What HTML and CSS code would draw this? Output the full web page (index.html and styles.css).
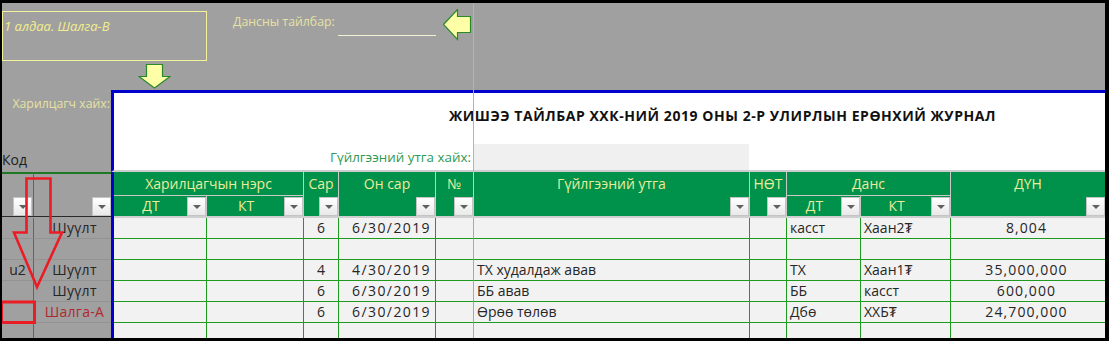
FILE: index.html
```html
<!DOCTYPE html>
<html lang="mn">
<head>
<meta charset="utf-8">
<title>Ерөнхий журнал</title>
<link rel="stylesheet" href="styles.css">
</head>
<body>
<div class="frame">
  <div class="top">
    <div class="top-row">
      <div class="note">1 алдаа. Шалга-В</div>
      <div class="acct-label">Дансны тайлбар:</div>
      <div class="acct-input"></div>
      <svg class="arrow-left" width="29" height="32" viewBox="0 0 29 32"><polygon points="0.5,15.5 14.5,0.5 14.5,7.5 27.5,7.5 27.5,23.5 14.5,23.5 14.5,30.5" fill="#ffffa8" stroke="#2a8a2a" stroke-width="1.2"/></svg>
    </div>
    <svg class="arrow-down" width="33" height="25" viewBox="0 0 33 25"><polygon points="8.5,0.5 24.5,0.5 24.5,12.5 32,12.5 16.5,24 1,12.5 8.5,12.5" fill="#ffffa8" stroke="#2a8a2a" stroke-width="1.2"/></svg>
  </div>

  <div class="mid">
    <div class="mid-left">
      <div class="cust-search">Харилцагч хайх:</div>
      <div class="code">Код</div>
    </div>
    <div class="mid-right">
      <div class="title">ЖИШЭЭ ТАЙЛБАР ХХК-НИЙ 2019 ОНЫ 2-Р УЛИРЛЫН ЕРӨНХИЙ ЖУРНАЛ</div>
      <div class="search-row">
        <div class="search-label">Гүйлгээний утга хайх:</div>
        <div class="search-box"></div>
      </div>
    </div>
  </div>

  <div class="grid head">
    <div class="h-left h-a"><span class="dd"></span></div>
    <div class="h-left h-b"><span class="dd"></span></div>
    <div class="blue h-blue"></div>
    <div class="h h-group h-cust">Харилцагчын нэрс</div>
    <div class="h h-sub h-c4"><span class="h-txt">ДТ</span><span class="dd"></span></div>
    <div class="h h-sub h-c5"><span class="h-txt">КТ</span><span class="dd"></span></div>
    <div class="h h-span h-c6"><span class="h-top">Сар</span><span class="dd"></span></div>
    <div class="h h-span h-c7"><span class="h-top">Он сар</span><span class="dd"></span></div>
    <div class="h h-span h-c8"><span class="h-top">№</span><span class="dd"></span></div>
    <div class="h h-span h-c9"><span class="h-top">Гүйлгээний утга</span><span class="dd"></span></div>
    <div class="h h-span h-c10"><span class="h-top">НӨТ</span><span class="dd"></span></div>
    <div class="h h-group h-acct">Данс</div>
    <div class="h h-sub h-c11"><span class="h-txt">ДТ</span><span class="dd"></span></div>
    <div class="h h-sub h-c12"><span class="h-txt">КТ</span><span class="dd"></span></div>
    <div class="h h-span h-c13 h-last"><span class="h-top">ДҮН</span><span class="dd"></span></div>
  </div>

  <div class="grid sep">
    <div class="sep-left"></div>
    <div class="blue"></div>
    <div class="sep-right"></div>
  </div>

  <div class="grid row">
    <div class="c ca"></div><div class="c cb">Шуүлт</div><div class="blue"></div>
    <div class="c"></div><div class="c"></div><div class="c cen">6</div><div class="c date">6/30/2019</div><div class="c no"></div>
    <div class="c"></div><div class="c"></div><div class="c">касст</div><div class="c">Хаан2₮</div><div class="c sum">8,004</div>
  </div>
  <div class="grid row">
    <div class="c ca"></div><div class="c cb"></div><div class="blue"></div>
    <div class="c"></div><div class="c"></div><div class="c cen"></div><div class="c date"></div><div class="c no"></div>
    <div class="c"></div><div class="c"></div><div class="c"></div><div class="c"></div><div class="c sum"></div>
  </div>
  <div class="grid row">
    <div class="c ca">u2</div><div class="c cb">Шуүлт</div><div class="blue"></div>
    <div class="c"></div><div class="c"></div><div class="c cen">4</div><div class="c date">4/30/2019</div><div class="c no"></div>
    <div class="c">ТХ худалдаж авав</div><div class="c"></div><div class="c">ТХ</div><div class="c">Хаан1₮</div><div class="c sum">35,000,000</div>
  </div>
  <div class="grid row">
    <div class="c ca"></div><div class="c cb">Шуүлт</div><div class="blue"></div>
    <div class="c"></div><div class="c"></div><div class="c cen">6</div><div class="c date">6/30/2019</div><div class="c no"></div>
    <div class="c">ББ авав</div><div class="c"></div><div class="c">ББ</div><div class="c">касст</div><div class="c sum">600,000</div>
  </div>
  <div class="grid row">
    <div class="c ca"></div><div class="c cb warn">Шалга-А</div><div class="blue"></div>
    <div class="c"></div><div class="c"></div><div class="c cen">6</div><div class="c date">6/30/2019</div><div class="c no"></div>
    <div class="c">Өрөө төлөв</div><div class="c"></div><div class="c">Дбө</div><div class="c">ХХБ₮</div><div class="c sum">24,700,000</div>
  </div>
  <div class="grid row">
    <div class="c ca"></div><div class="c cb"></div><div class="blue"></div>
    <div class="c"></div><div class="c"></div><div class="c cen"></div><div class="c date"></div><div class="c no"></div>
    <div class="c"></div><div class="c"></div><div class="c"></div><div class="c"></div><div class="c sum"></div>
  </div>

  <div class="freeze"></div>
  <svg class="red-mark" width="80" height="340" viewBox="0 0 80 340">
    <polygon points="26.5,178.5 50.5,178.5 50.5,232.5 62,232.5 37,287 14,232.5 26.5,232.5" fill="none" stroke="#ec1c24" stroke-width="2.6" stroke-linejoin="miter"/>
    <rect x="1.5" y="302" width="33" height="20.5" fill="none" stroke="#ec1c24" stroke-width="3"/>
  </svg>
</div>
</body>
</html>
```

FILE: styles.css
```css
* { box-sizing: border-box; }

html, body {
  margin: 0;
  padding: 0;
  background: #000;
}

body {
  font-family: "Open Sans", "Noto Sans", "Liberation Sans", sans-serif;
  font-size: 14px;
  color: #262626;
}

.frame {
  position: relative;
  width: 1109px;
  height: 341px;
  background: #a0a0a0;
  border-top: 3px solid #000;
  border-left: 2px solid #000;
  border-right: 4px solid #000;
  border-bottom: 3px solid #000;
  overflow: hidden;
}

/* ---------- top gray area ---------- */
.top {
  height: 87px;
}

.top-row {
  display: flex;
  align-items: flex-start;
  height: 58px;
}

.note {
  margin-top: 8px;
  width: 205px;
  height: 50px;
  border: 1px solid #f4f29a;
  padding: 5px 0 0 1px;
  font-style: italic;
  font-size: 13px;
  line-height: 18px;
  color: #f2ee8c;
}

.acct-label {
  margin-left: 26px;
  margin-top: 10px;
  width: 101px;
  font-size: 12.3px;
  line-height: 18px;
  color: #e6e2a2;
  white-space: nowrap;
}

.acct-input {
  margin-left: 4px;
  margin-top: 32px;
  width: 98px;
  height: 1px;
  background: #f3f1d6;
}

.arrow-left {
  display: block;
  margin-left: 7px;
  margin-top: 6px;
}

.arrow-down {
  display: block;
  margin-left: 136px;
  margin-top: 3px;
}

/* ---------- middle (search / title) ---------- */
.mid {
  display: flex;
  height: 82px;
}

.mid-left {
  width: 109px;
  display: flex;
  flex-direction: column;
}

.cust-search {
  padding-top: 5px;
  padding-right: 1px;
  text-align: right;
  font-size: 12.3px;
  line-height: 18px;
  color: #e6e2a2;
  white-space: nowrap;
}

.code {
  margin-top: 37px;
  font-size: 14px;
  line-height: 20px;
  color: #1e1e1e;
}

.mid-right {
  width: 994px;
  background: #fff;
  border-top: 3px solid #0000cc;
  border-left: 3px solid #0000cc;
  border-bottom: 2px solid #cdcdcd;
  display: flex;
  flex-direction: column;
}

.title {
  height: 51px;
  padding-top: 14px;
  padding-left: 335px;
  font-weight: 700;
  font-size: 14px;
  line-height: 18px;
  letter-spacing: 0.55px;
  color: #111;
  white-space: nowrap;
}

.search-row {
  display: flex;
  height: 26px;
}

.search-label {
  width: 360px;
  padding-right: 3px;
  text-align: right;
  font-size: 13.4px;
  line-height: 26px;
  color: #2f9a55;
  white-space: nowrap;
}

.search-box {
  width: 275px;
  background: #f0f0f0;
}

/* ---------- grids ---------- */
.grid {
  display: grid;
  grid-template-columns: 32px 77px 3px 93px 97px 35px 97px 38px 276px 37px 74px 90px 154px;
}

.blue {
  background: #0000cc;
}

/* header */
.head {
  grid-template-rows: 24px 20px;
  height: 44px;
}

.h-left {
  grid-row: 1 / 3;
  background: #a0a0a0;
  border-top: 2px solid #1d7a22;
  display: flex;
  align-items: flex-end;
  justify-content: flex-end;
}

.h-a {
  grid-column: 1;
  border-right: 1px solid #2b8c2b;
  padding-right: 1px;
}

.h-b {
  grid-column: 2;
}

.h-blue {
  grid-column: 3;
  grid-row: 1 / 3;
}

.h {
  background: #00924a;
  color: #ecec9c;
  font-size: 14px;
  border-right: 1px solid #c9c9c9;
  white-space: nowrap;
  overflow: hidden;
}

.h-group {
  grid-row: 1;
  text-align: center;
  line-height: 23px;
  border-bottom: 1px solid #c9c9c9;
}

.h-cust { grid-column: 4 / 6; }
.h-acct { grid-column: 11 / 13; }

.h-sub {
  grid-row: 2;
  position: relative;
  display: flex;
  align-items: flex-end;
  justify-content: flex-end;
}

.h-txt {
  position: absolute;
  left: 0;
  right: 18px;
  top: 0;
  text-align: center;
  line-height: 20px;
}

.h-c4 { grid-column: 4; }
.h-c5 { grid-column: 5; }
.h-c11 { grid-column: 11; }
.h-c12 { grid-column: 12; }

.h-span {
  grid-row: 1 / 3;
  display: flex;
  flex-direction: column;
  align-items: stretch;
}

.h-c6 { grid-column: 6; }
.h-c7 { grid-column: 7; }
.h-c8 { grid-column: 8; }
.h-c9 { grid-column: 9; }
.h-c10 { grid-column: 10; }
.h-c13 { grid-column: 13; }

.h-last { border-right: none; }

.h-top {
  display: block;
  text-align: center;
  line-height: 24px;
}

.h-span .dd {
  margin-top: auto;
  align-self: flex-end;
}

.dd {
  position: relative;
  display: block;
  width: 19px;
  height: 19px;
  background: linear-gradient(#ffffff, #e9e9e9);
  border: 1px solid #c4c4c4;
  flex: none;
}

.dd::after {
  content: "";
  position: absolute;
  left: 5px;
  top: 7px;
  border-left: 4px solid transparent;
  border-right: 4px solid transparent;
  border-top: 4px solid #606060;
}

/* separator under header */
.sep {
  height: 2px;
}

.sep-left {
  grid-column: 1 / 3;
  background: #a0a0a0;
  border-top: 1px solid #2a2a2a;
}

.sep-right {
  grid-column: 4 / 14;
  background: #cfcfcf;
}

/* data rows */
.row {
  height: 21px;
}

.c {
  background: #f2f2f2;
  border-right: 1px solid #1e9a1e;
  border-bottom: 1px solid #1e9a1e;
  padding: 0 3px;
  font-size: 14px;
  line-height: 20px;
  color: #262626;
  white-space: nowrap;
  overflow: hidden;
}

.ca {
  background: #a0a0a0;
  border-right: 1px solid #2b8c2b;
  border-bottom: 1px solid #939393;
  text-align: center;
  padding: 0;
}

.cb {
  background: #a0a0a0;
  border-right: none;
  border-bottom: 1px solid #939393;
  text-align: center;
  padding: 0 0 0 4px;
  letter-spacing: 0.3px;
}

.warn {
  color: #b0282c;
}

.cen {
  text-align: center;
}

.date {
  text-align: right;
  padding-right: 4px;
  letter-spacing: 1.4px;
}

.no {
  border-right: 1px solid #a9a9a9;
}

.sum {
  border-right: none;
  text-align: center;
  letter-spacing: 1.1px;
  padding-left: 0;
}

/* overlays */
.freeze {
  position: absolute;
  left: 471px;
  top: 0;
  width: 1px;
  height: 169px;
  background: #b3b3b3;
}

.red-mark {
  position: absolute;
  left: -2px;
  top: -3px;
}
```
